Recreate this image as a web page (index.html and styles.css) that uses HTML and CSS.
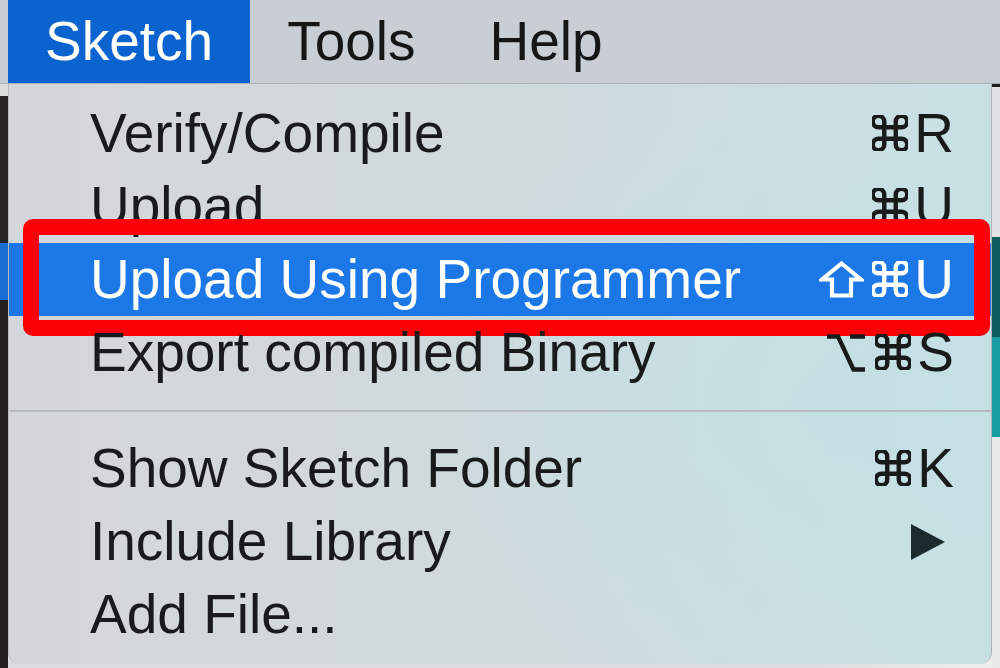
FILE: index.html
```html
<!DOCTYPE html>
<html lang="en">
<head>
<meta charset="utf-8">
<title>Sketch menu</title>
<link rel="stylesheet" href="styles.css">
</head>
<body>
<svg width="0" height="0" class="defs" aria-hidden="true">
  <symbol id="cmd" viewBox="2.6 2.6 18.8 18.8">
    <path d="M15 6v12a3 3 0 1 0 3-3H6a3 3 0 1 0 3 3V6a3 3 0 1 0-3 3h12a3 3 0 1 0-3-3" fill="none" stroke="currentColor" stroke-width="2.3" stroke-linejoin="round"/>
  </symbol>
</svg>
<div class="screen">
  <div class="menubar">
    <div class="mb-item active">Sketch</div>
    <div class="mb-item">Tools</div>
    <div class="mb-item">Help</div>
  </div>
  <div class="stage">
    <div class="strip strip-left"></div>
    <div class="menu">
      <div class="row"><span class="label">Verify/Compile</span><span class="keys"><svg class="cmd" width="36" height="36"><use href="#cmd"/></svg>R</span></div>
      <div class="row"><span class="label">Upload</span><span class="keys"><svg class="cmd" width="36" height="36"><use href="#cmd"/></svg>U</span></div>
      <div class="row selected">
        <span class="label">Upload Using Programmer</span>
        <span class="keys">
          <svg class="mod shift" width="45" height="37" viewBox="0 0 45 37" aria-label="Shift"><polygon points="22.5,2.5 42,18.5 32,18.5 32,34.5 13,34.5 13,18.5 3,18.5" fill="none" stroke="#ffffff" stroke-width="4.2" stroke-linejoin="miter"/></svg><svg class="cmd" width="36" height="36"><use href="#cmd"/></svg>U
        </span>
        <div class="callout"></div>
      </div>
      <div class="row"><span class="label">Export compiled Binary</span>
        <span class="keys">
          <svg class="mod opt" width="38" height="38" viewBox="0 0 38 38" aria-label="Option"><path d="M0 2.5 H11 L26.5 35.5 H38 M23 2.5 H38" fill="none" stroke="#181a1b" stroke-width="4.4"/></svg><svg class="cmd" width="36" height="36"><use href="#cmd"/></svg>S
        </span>
      </div>
      <div class="separator"></div>
      <div class="row"><span class="label">Show Sketch Folder</span><span class="keys"><svg class="cmd" width="36" height="36"><use href="#cmd"/></svg>K</span></div>
      <div class="row"><span class="label">Include Library</span>
        <svg class="submenu" width="34" height="36" viewBox="0 0 34 36"><polygon points="0,0 34,18 0,36" fill="#1c2b2e"/></svg>
      </div>
      <div class="row"><span class="label">Add File...</span></div>
    </div>
    <div class="strip strip-right"></div>
  </div>
</div>
</body>
</html>
```
FILE: styles.css
```css
html, body {
  margin: 0;
  padding: 0;
}
body {
  width: 1000px;
  height: 668px;
  overflow: hidden;
  background: #e6e8e9;
  font-family: "Liberation Sans", "DejaVu Sans", Arial, sans-serif;
}
.defs {
  position: absolute;
  width: 0;
  height: 0;
}
.screen {
  width: 1000px;
  height: 668px;
  display: flex;
  flex-direction: column;
}
.menubar {
  height: 84px;
  flex: none;
  display: flex;
  background: #c9ced5;
  border-bottom: 1px solid #a9aeb4;
  box-sizing: border-box;
  padding-left: 8px;
}
.mb-item {
  font-size: 55px;
  line-height: 83px;
  padding: 0 37px;
  color: #161616;
}
.mb-item.active {
  background: #0b63cf;
  color: #ffffff;
}
.stage {
  flex: 1;
  display: flex;
  align-items: flex-start;
  background: linear-gradient(90deg, #26251f 0 8px, #d9dbdc 8px 80%, #eef0f0 100%);
}
.strip {
  width: 8px;
  height: 584px;
  flex: none;
}
.strip-left {
  background: linear-gradient(180deg, #dcdcdc 0 12px, #262521 12px 159px, #1b6fd4 159px 216px, #23221e 216px 100%);
}
.strip-right {
  background: linear-gradient(180deg, #1e1e1e 0 3px, #e0e2e3 3px 153px, #0c5b5f 153px 253px, #169ca1 253px 353px, #e8eaea 353px 100%);
}
.menu {
  flex: 1;
  height: 580px;
  box-sizing: border-box;
  padding: 13px 0;
  border-radius: 0 0 12px 12px;
  border-right: 1px solid #aab4b6;
  border-left: 1px solid #b8bcbe;
  background:
    radial-gradient(ellipse 500px 300px at 85% 55%, rgba(190, 225, 230, 0.55), rgba(190, 225, 230, 0)),
    linear-gradient(90deg, #d4d7d9 0%, #d1d9dc 45%, #c8e0e4 100%);
}
.row {
  position: relative;
  height: 73px;
  display: flex;
  align-items: center;
  justify-content: space-between;
  padding: 0 37px 0 81px;
  font-size: 55px;
  line-height: 73px;
  color: #181a1b;
  white-space: nowrap;
}
.keys {
  display: flex;
  align-items: center;
}
.cmd {
  margin-right: 6px;
  position: relative;
  top: -1px;
}
.mod {
  position: relative;
  top: 0;
}
.shift {
  margin-right: 8px;
}
.opt {
  margin-right: 10px;
}
.row.selected {
  background: #1b78e6;
  color: #ffffff;
}
.callout {
  position: absolute;
  left: 14px;
  right: 1px;
  top: -24px;
  bottom: -20px;
  border: 16px solid #fb0006;
  border-radius: 10px;
}
.separator {
  height: 2px;
  margin: 21px 0 20px;
  background: #b6bcbf;
}
.submenu {
  margin-right: 9px;
}
```
